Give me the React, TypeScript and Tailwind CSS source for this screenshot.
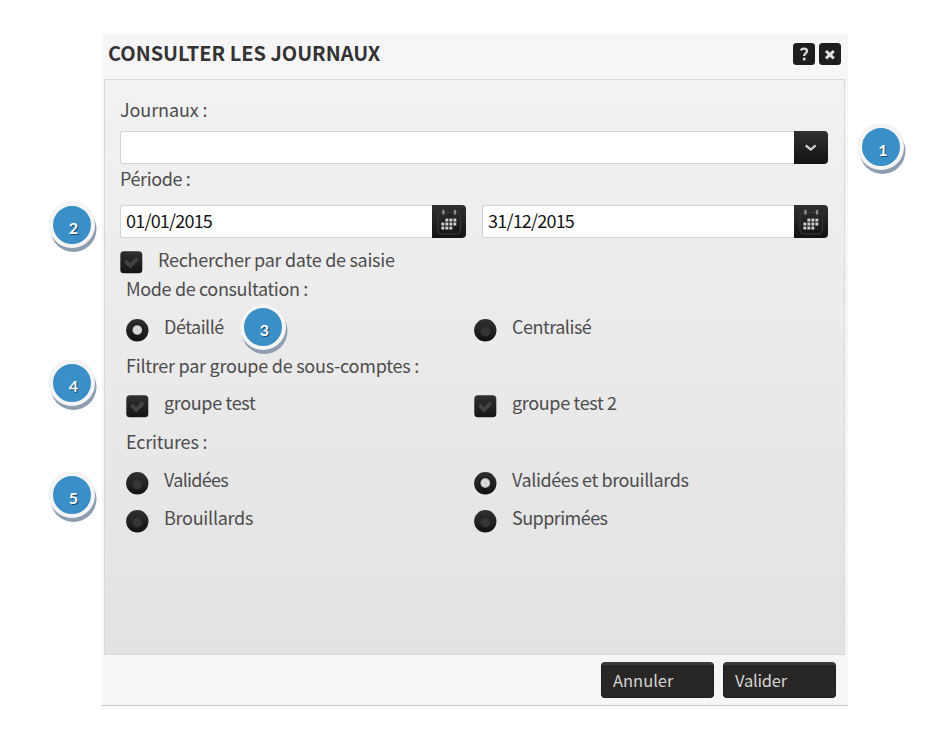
import React, { useState } from "react";

type OptionProps = {
  label: string;
  kind: "radio" | "checkbox";
  checked?: boolean;
  onClick?: () => void;
  textClass?: string;
};

type FieldProps = {
  value: string;
  icon: "chevron" | "calendar";
};

const Radio: React.FC<{ checked?: boolean }> = ({ checked }) => (
  <svg width="23" height="23" viewBox="0 0 23 23" className="shrink-0">
    <defs>
      <linearGradient id="radioBg" x1="0" y1="0" x2="0" y2="1">
        <stop offset="0" stopColor="#303030" />
        <stop offset="0.5" stopColor="#222" />
        <stop offset="1" stopColor="#111" />
      </linearGradient>
      <radialGradient id="dot">
        <stop offset="0" stopColor="#c4c4c4" />
        <stop offset="0.6" stopColor="#e2e2e2" />
        <stop offset="1" stopColor="#a0a0a0" />
      </radialGradient>
    </defs>
    <circle cx="11.3" cy="11.3" r="11.2" fill="url(#radioBg)" />
    {checked ? (
      <>
        <circle cx="11.3" cy="11" r="6.3" fill="#161616" />
        <circle cx="11.3" cy="11" r="5" fill="url(#dot)" />
      </>
    ) : (
      <>
        <circle cx="11.3" cy="12" r="5.6" fill="#2a2a2a" />
        <circle cx="11.3" cy="12.6" r="4.4" fill="#363636" />
      </>
    )}
  </svg>
);

const Checkbox: React.FC = () => (
  <svg width="23" height="23" viewBox="0 0 23 23" className="shrink-0">
    <defs>
      <linearGradient id="checkBg" x1="0" y1="0" x2="0" y2="1">
        <stop offset="0" stopColor="#303030" />
        <stop offset="1" stopColor="#141414" />
      </linearGradient>
    </defs>
    <rect x="0.3" y="0.3" width="22" height="22" rx="3.6" fill="url(#checkBg)" />
    <path d="M5.4 10 L10.2 14.8 L17.2 7.6" fill="none" stroke="#434343" strokeWidth="3.8" />
  </svg>
);

const Option: React.FC<OptionProps> = ({ label, kind, checked, onClick, textClass }) => (
  <div onClick={onClick} className="flex cursor-pointer items-start gap-[15px]">
    <div className="mt-[3px]">{kind === "radio" ? <Radio checked={checked} /> : <Checkbox />}</div>
    <span className={textClass}>{label}</span>
  </div>
);

const ChevronIcon = () => (
  <svg width="34" height="33" viewBox="0 0 34 33">
    <path d="M11.7 14.3 L16.7 18.6 L21.7 14.3" fill="none" stroke="#d2d2d2" strokeWidth="2.3" />
  </svg>
);

// the dots of the calendar, as [row, first column, last column]
const dots = [
  [0, 1, 3],
  [1, 0, 3],
  [2, 0, 2],
];

const CalendarIcon = () => (
  <svg width="34" height="33" viewBox="0 0 34 33">
    <rect x="6" y="7.5" width="22.5" height="21.5" rx="4" fill="none" stroke="#3a3a3a" />
    <rect x="10.2" y="4.8" width="2.4" height="5" rx="1" fill="#8a8a8a" />
    <rect x="21.8" y="4.8" width="2.4" height="5" rx="1" fill="#8a8a8a" />
    {dots.map(([row, from, to]) =>
      [0, 1, 2, 3]
        .filter((c) => c >= from && c <= to)
        .map((c) => (
          <rect key={`${row}-${c}`} x={9.4 + c * 4} y={13.6 + row * 4} width="2.9" height="2.9" fill="#d0d0d0" />
        ))
    )}
  </svg>
);

const Field: React.FC<FieldProps> = ({ value, icon }) => (
  <div className="flex h-[33px] flex-1">
    <div className="flex-1 rounded-l-[3px] border border-r-0 border-[#d4d4d4] bg-white pt-[4px] pl-[5px] tracking-[-0.8px] text-[#161616]">
      {value}
    </div>
    <button className="h-[33px] w-[34px] rounded-r-[4px] bg-linear-to-b from-[#303030] to-[#141414]">
      {icon === "chevron" ? <ChevronIcon /> : <CalendarIcon />}
    </button>
  </div>
);

const Badge: React.FC<{ n: number; place: string }> = ({ n, place }) => (
  <div
    className={`absolute h-[46px] w-[46px] rounded-full border-[4.5px] border-[#f5f5f5] bg-[#3a90c6] pt-[14px] pl-[4px] text-center font-['Lato',sans-serif] text-[16px] leading-[16px] font-bold text-white shadow-[1.5px_4px_0_0_#8e9db0,0_0_1px_0_#ccc] [text-shadow:1px_1px_0_#1d4663] ${place}`}
  >
    {n}
  </div>
);

const App: React.FC = () => {
  const [mode, setMode] = useState("detail");
  const [ecritures, setEcritures] = useState("both");

  return (
    <div className="relative h-[750px] w-[938px] overflow-hidden bg-white pt-[34px] pl-[102px] font-['Noto_Sans_CJK_SC','Open_Sans',sans-serif] text-[18px] leading-[20px] whitespace-nowrap text-[#4d4d4d]">
      <div className="flex h-[672px] w-[746px] flex-col border-b border-[#c6c6c6] bg-[#f6f6f6] pr-[3px] pl-[2px]">
        <div className="flex h-[45px] shrink-0 items-start justify-between pt-[9px] pr-[4px] pl-[4px]">
          <h1 className="text-[20px] font-bold tracking-[-0.03px] text-[#333]">CONSULTER LES JOURNAUX</h1>
          <div className="flex gap-[4px]">
            <svg width="22" height="22" viewBox="0 0 22 22">
              <rect width="22" height="22" rx="3.5" fill="#1e1e1e" />
              <path d="M7.6 7.3 Q9 5.6 11.2 5.6 Q14 5.6 14 8 Q14 9.4 12.6 10.4 Q11.2 11.4 11.2 13" fill="none" stroke="#ddd" strokeWidth="2.3" />
              <rect x="9.9" y="14.7" width="2.7" height="2.7" fill="#ddd" />
            </svg>
            <svg width="22" height="22" viewBox="0 0 22 22">
              <rect width="22" height="22" rx="3.5" fill="#1e1e1e" />
              <path d="M7 8 L14.8 15.4 M14.8 8 L7 15.4" stroke="#e2e2e2" strokeWidth="3" />
            </svg>
          </div>
        </div>

        <div className="h-[576px] shrink-0 border border-[#ddd8d8] bg-linear-to-b from-[#f2f2f2] to-[#e2e2e2] pr-[16px] pl-[15px]">
          <div className="h-[51px] pt-[19px] tracking-[-0.1px]">Journaux :</div>
          <div className="flex">
            <Field value="" icon="chevron" />
          </div>
          <div className="h-[41px] pt-[4px] tracking-[-0.4px]">Période :</div>
          <div className="flex gap-[16px]">
            <Field value="01/01/2015" icon="calendar" />
            <Field value="31/12/2015" icon="calendar" />
          </div>
          <div className="mt-[10px] h-[30px]">
            <Option kind="checkbox" label="Rechercher par date de saisie" textClass="pt-px tracking-[-0.28px]" />
          </div>

          <div className="pl-[6px]">
            <div className="h-[38px] tracking-[-0.36px]">Mode de consultation :</div>
            <div className="grid h-[39px] grid-cols-[348px_1fr]">
              <Option kind="radio" label="Détaillé" textClass="tracking-[-0.5px]" checked={mode === "detail"} onClick={() => setMode("detail")} />
              <Option kind="radio" label="Centralisé" textClass="tracking-[-0.5px]" checked={mode === "central"} onClick={() => setMode("central")} />
            </div>
            <div className="h-[37px] tracking-[-0.25px]">Filtrer par groupe de sous-comptes :</div>
            <div className="grid h-[39px] grid-cols-[348px_1fr]">
              <Option kind="checkbox" label="groupe test" textClass="tracking-[-0.35px]" />
              <Option kind="checkbox" label="groupe test 2" textClass="tracking-[-0.35px]" />
            </div>
            <div className="h-[38px] tracking-[-0.2px]">Ecritures :</div>
            <div className="grid auto-rows-[37.5px] grid-cols-[348px_1fr]">
              <Option kind="radio" label="Validées" textClass="tracking-[-0.7px]" checked={ecritures === "valid"} onClick={() => setEcritures("valid")} />
              <Option kind="radio" label="Validées et brouillards" textClass="tracking-[-0.4px]" checked={ecritures === "both"} onClick={() => setEcritures("both")} />
              <Option kind="radio" label="Brouillards" textClass="tracking-[-0.27px]" checked={ecritures === "draft"} onClick={() => setEcritures("draft")} />
              <Option kind="radio" label="Supprimées" textClass="tracking-[-0.55px]" checked={ecritures === "deleted"} onClick={() => setEcritures("deleted")} />
            </div>
          </div>
        </div>

        <div className="flex justify-end gap-[9px] pt-[7px] pr-[9px]">
          <button className="h-[36px] w-[113px] rounded-[4px] border border-t-[3px] border-[#1f1c1c] border-t-[#3c3a3a] bg-[#292626] pb-[3px] pl-[11px] text-left text-[16.5px] text-[#d4d4d4]">
            Annuler
          </button>
          <button className="h-[36px] w-[113px] rounded-[4px] border border-t-[3px] border-[#1f1c1c] border-t-[#3c3a3a] bg-[#292626] pb-[3px] pl-[11px] text-left text-[16.5px] tracking-[-0.2px] text-[#d4d4d4]">
            Valider
          </button>
        </div>
      </div>

      <Badge n={1} place="left-[858px] top-[123.5px]" />
      <Badge n={2} place="left-[48.5px] top-[202px]" />
      <Badge n={3} place="left-[239.5px] top-[303.5px]" />
      <Badge n={4} place="left-[48.5px] top-[360px]" />
      <Badge n={5} place="left-[48.5px] top-[472px]" />
    </div>
  );
};

export default App;
